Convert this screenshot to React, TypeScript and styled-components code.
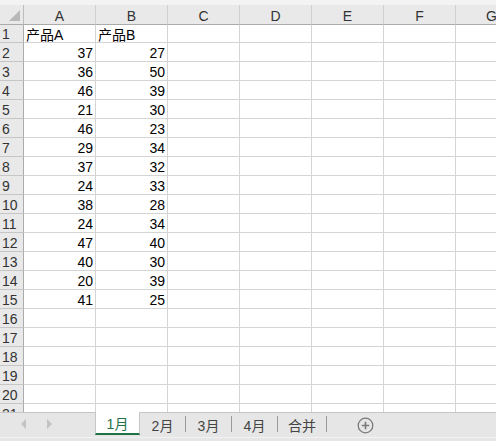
import React from "react";
import styled, { createGlobalStyle } from "styled-components";

const Global = createGlobalStyle`
  html, body { margin: 0; padding: 0; background: #fff; }
  body { font-family: "Liberation Sans", "Noto Sans CJK SC", Arial, sans-serif; overflow: hidden; }
`;

const Page = styled.div`
  width: 496px;
  height: 441px;
  display: flex;
  flex-direction: column;
  overflow: hidden;
`;

const TopStrip = styled.div`
  height: 5px;
  flex: none;
  background: #f3f3f3;
`;

const SheetArea = styled.div`
  flex: 1;
  overflow: hidden;
`;

const Grid = styled.div`
  display: grid;
  grid-template-columns: 24px repeat(7, 72px);
  grid-auto-rows: 19px;
  width: max-content;
`;

const ColHead = styled.div<{ $corner?: boolean }>`
  box-sizing: border-box;
  height: 20px;
  background: #e9e9e9;
  border-right: 1px solid ${(p) => (p.$corner ? "#bdbdbd" : "#d0d0d0")};
  border-bottom: 1px solid #ababab;
  display: flex;
  align-items: center;
  justify-content: center;
  font-size: 14px;
  color: #333;
  position: relative;
  padding-top: 2px;
`;

const CornerTri = styled.div`
  position: absolute;
  right: 3px;
  bottom: 3px;
  width: 0;
  height: 0;
  border-left: 11px solid transparent;
  border-bottom: 11px solid #b8b8b8;
`;

const RowHead = styled.div`
  box-sizing: border-box;
  background: #e9e9e9;
  border-right: 1px solid #ababab;
  border-bottom: 1px solid #c6c6c6;
  font-size: 14px;
  color: #333;
  display: flex;
  align-items: center;
  padding-left: 2px;
  padding-top: 2px;
`;

const Cell = styled.div<{ $num?: boolean }>`
  box-sizing: border-box;
  border-right: 1px solid #d4d4d4;
  border-bottom: 1px solid #d4d4d4;
  font-size: 14px;
  color: #000;
  display: flex;
  align-items: center;
  justify-content: ${(p) => (p.$num ? "flex-end" : "flex-start")};
  padding: 2px 2px 0;
  white-space: nowrap;
  overflow: hidden;
`;

const TabBar = styled.div`
  height: 29px;
  flex: none;
  box-sizing: border-box;
  border-top: 1px solid #c6c6c6;
  background: #e6e6e6;
  display: flex;
  align-items: flex-start;
  position: relative;
`;

const BottomLine = styled.div`
  position: absolute;
  left: 0;
  right: 0;
  bottom: 3px;
  height: 1px;
  background: #f2f2f2;
`;

const Nav = styled.div`
  width: 95px;
  height: 22px;
  display: flex;
  align-items: center;
  padding-left: 21px;
  gap: 21px;
  box-sizing: border-box;
`;

const Arrow = styled.div<{ $dir: "l" | "r" }>`
  width: 0;
  height: 0;
  border-top: 5px solid transparent;
  border-bottom: 5px solid transparent;
  ${(p) => (p.$dir === "l" ? "border-right: 5px solid #c2c2c2;" : "border-left: 5px solid #c2c2c2;")}
`;

const Tab = styled.div<{ $active?: boolean; $w?: number }>`
  box-sizing: border-box;
  width: ${(p) => p.$w ?? 45}px;
  height: 22px;
  display: flex;
  align-items: center;
  justify-content: center;
  font-size: 14px;
  position: relative;
  padding-top: 1px;
  color: ${(p) => (p.$active ? "#217346" : "#444")};
  background: ${(p) => (p.$active ? "#fff" : "transparent")};
  ${(p) =>
    p.$active
      ? "border-left: 1px solid #c6c6c6; border-right: 1px solid #c6c6c6; border-bottom: 2px solid #217346; margin-top: -1px; height: 23px;"
      : ""}
`;

const Sep = styled.div`
  width: 1px;
  height: 16px;
  background: #9a9a9a;
  align-self: center;
  margin-top: -6px;
`;

const AddWrap = styled.div`
  margin-left: 30px;
  height: 22px;
  display: flex;
  align-items: center;
  padding-top: 1px;
`;

const colA = [37, 36, 46, 21, 46, 29, 37, 24, 38, 24, 47, 40, 20, 41];
const colB = [27, 50, 39, 30, 23, 34, 32, 33, 28, 34, 40, 30, 39, 25];
const letters = ["A", "B", "C", "D", "E", "F", "G"];

export default function App() {
  const rows: React.ReactNode[] = [];
  for (let r = 1; r <= 21; r++) {
    const cells: React.ReactNode[] = [];
    for (let c = 0; c < 7; c++) {
      let content: React.ReactNode = null;
      let num = false;
      if (r === 1 && c === 0) content = "产品A";
      else if (r === 1 && c === 1) content = "产品B";
      else if (r >= 2 && r <= 15 && c === 0) {
        content = colA[r - 2];
        num = true;
      } else if (r >= 2 && r <= 15 && c === 1) {
        content = colB[r - 2];
        num = true;
      }
      cells.push(
        <Cell key={`${r}-${c}`} $num={num}>
          {content}
        </Cell>
      );
    }
    rows.push(
      <React.Fragment key={r}>
        <RowHead>{r}</RowHead>
        {cells}
      </React.Fragment>
    );
  }

  return (
    <Page>
      <Global />
      <TopStrip />
      <SheetArea>
        <Grid>
          <ColHead $corner>
            <CornerTri />
          </ColHead>
          {letters.map((l) => (
            <ColHead key={l}>{l}</ColHead>
          ))}
          {rows}
        </Grid>
      </SheetArea>
      <TabBar>
        <BottomLine />
        <Nav>
          <Arrow $dir="l" />
          <Arrow $dir="r" />
        </Nav>
        <Tab $active>1月</Tab>
        <Tab>2月</Tab>
        <Sep />
        <Tab>3月</Tab>
        <Sep />
        <Tab>4月</Tab>
        <Sep />
        <Tab $w={48}>合并</Tab>
        <Sep />
        <AddWrap>
          <svg width="17" height="17" viewBox="0 0 17 17">
            <circle cx="8.5" cy="8.5" r="7.3" fill="none" stroke="#7a7a7a" strokeWidth="1.3" />
            <path d="M8.5 4.8v7.4M4.8 8.5h7.4" stroke="#7a7a7a" strokeWidth="1.6" />
          </svg>
        </AddWrap>
      </TabBar>
    </Page>
  );
}
